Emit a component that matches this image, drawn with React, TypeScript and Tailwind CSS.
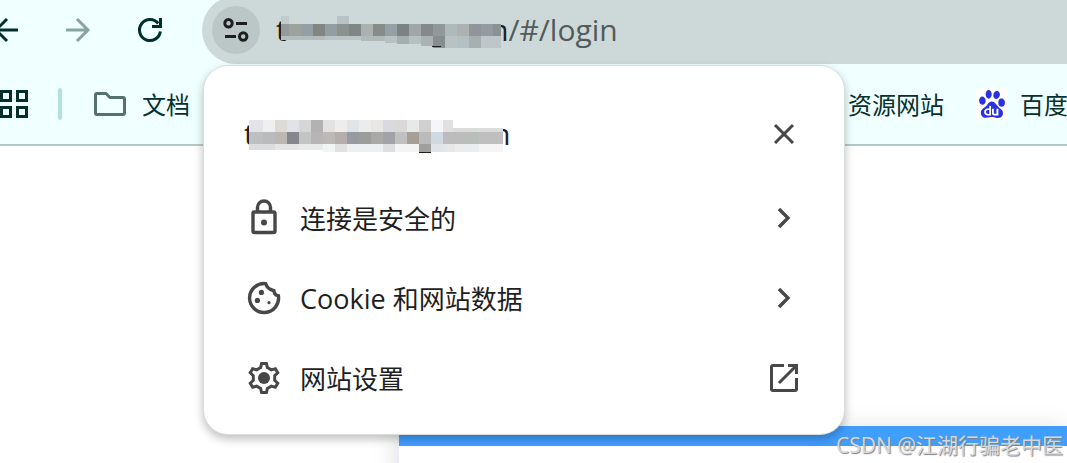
import type { ReactNode } from "react"
import { SiBaidu } from "react-icons/si"

type Block = [x: number, y: number, w: number, h: number, fill: string]

// Censored part of the address in the omnibox
const addressBlocks: Block[] = [
  [0, 4, 8, 8, "#c1cbcc"],
  [56, 4, 12, 8, "#b9c3c4"],
  [0, 12, 8, 12, "#939a9a"],
  [8, 12, 12, 12, "#9ca39e"],
  [20, 12, 12, 12, "#949fa5"],
  [32, 12, 12, 12, "#838580"],
  [44, 12, 12, 12, "#929ea2"],
  [56, 12, 12, 12, "#8b9391"],
  [68, 12, 12, 12, "#7f8786"],
  [80, 12, 12, 12, "#a9b1b1"],
  [92, 12, 12, 12, "#878c88"],
  [104, 12, 12, 12, "#959fa6"],
  [116, 12, 12, 12, "#7a8284"],
  [128, 12, 12, 12, "#9fa8a7"],
  [140, 12, 12, 12, "#85898c"],
  [152, 12, 12, 12, "#91989c"],
  [164, 12, 12, 12, "#b0b9b9"],
  [176, 12, 12, 12, "#adb1af"],
  [188, 12, 12, 12, "#8f959a"],
  [200, 12, 12, 12, "#929ba2"],
  [212, 12, 8, 12, "#8a9293"],
  [0, 24, 44, 4, "#b3bcbc"],
  [44, 24, 36, 4, "#bac4c5"],
  [80, 24, 24, 5, "#b0babb"],
  [104, 24, 12, 7, "#b8c1c2"],
  [116, 24, 12, 8, "#a4adaf"],
  [128, 24, 12, 8, "#b7c0c1"],
  [140, 24, 12, 10, "#aab2b4"],
  [152, 24, 12, 12, "#868e91"],
  [164, 24, 12, 12, "#b8c2c2"],
  [176, 24, 12, 12, "#b3bfc3"],
  [188, 24, 12, 12, "#a7afb2"],
  [200, 24, 20, 12, "#bec7c8"],
  [151, 34, 9, 1, "#1f1f1f"],
]

// Censored part of the site name in the popup
const titleBlocks: Block[] = [
  [0, 6, 14, 12, "#e2e4e7"],
  [14, 6, 12, 12, "#efefef"],
  [26, 6, 12, 12, "#dbdad7"],
  [38, 6, 12, 12, "#e2e3e6"],
  [50, 6, 12, 12, "#d6d6d7"],
  [62, 6, 12, 12, "#b4b1b3"],
  [74, 6, 12, 12, "#e2e2e2"],
  [86, 6, 12, 12, "#ededed"],
  [98, 6, 12, 12, "#e1e4e6"],
  [110, 6, 12, 12, "#ececec"],
  [122, 6, 12, 12, "#e8e7e5"],
  [134, 6, 12, 12, "#d8dadf"],
  [146, 6, 12, 12, "#dbd9d8"],
  [158, 6, 12, 12, "#e6e9e8"],
  [170, 6, 12, 12, "#cfd0cf"],
  [182, 6, 12, 12, "#f5f6f9"],
  [194, 6, 10, 12, "#e1e0df"],
  [204, 14, 50, 4, "#dcdcdc"],
  [0, 18, 14, 12, "#bdbfc0"],
  [14, 18, 12, 12, "#babbbc"],
  [26, 18, 12, 12, "#bbb8b2"],
  [38, 18, 12, 12, "#86878c"],
  [50, 18, 12, 12, "#c3c5c4"],
  [62, 18, 12, 12, "#b6b6b6"],
  [74, 18, 12, 12, "#bdbab5"],
  [86, 18, 12, 12, "#b4aeae"],
  [98, 18, 12, 12, "#979ba1"],
  [110, 18, 12, 12, "#9b9d9b"],
  [122, 18, 12, 12, "#a8a9a8"],
  [134, 18, 12, 12, "#a1a3a7"],
  [146, 18, 12, 12, "#c0c0c0"],
  [158, 18, 12, 12, "#a59f98"],
  [170, 18, 12, 12, "#bbbbbb"],
  [182, 18, 12, 12, "#d0d8e1"],
  [194, 18, 24, 12, "#bcbcbc"],
  [218, 18, 12, 12, "#b9bebb"],
  [230, 18, 24, 12, "#bfbfbf"],
  [0, 30, 26, 6, "#dcddde"],
  [26, 30, 24, 6, "#e5e5e4"],
  [50, 30, 24, 6, "#e9ebeb"],
  [74, 30, 12, 8, "#f3f4f4"],
  [86, 30, 12, 8, "#e2e1df"],
  [98, 30, 36, 8, "#eeeff0"],
  [134, 30, 12, 8, "#dedfe1"],
  [146, 30, 24, 8, "#f4f4f4"],
  [170, 30, 12, 8, "#9f9f9e"],
  [182, 30, 12, 8, "#e0e3e7"],
  [194, 30, 12, 8, "#e7e7e7"],
  [206, 30, 24, 8, "#eaecee"],
  [230, 30, 24, 8, "#f5f5f5"],
  [170, 38, 12, 1, "#1f1f1f"],
]

function Mosaic({ blocks, width, height, className }: { blocks: Block[]; width: number; height: number; className: string }) {
  return (
    <svg width={width} height={height} shapeRendering="crispEdges" className={`relative z-10 shrink-0 ${className}`} aria-hidden="true">
      {blocks.map(([x, y, w, h, fill]) => (
        <rect key={`${x}-${y}`} x={x} y={y} width={w} height={h} fill={fill} />
      ))}
    </svg>
  )
}

// All icons are drawn around the middle of a 48px box
function Icon({ children, className = "" }: { children: ReactNode; className?: string }) {
  return (
    <svg
      width="48"
      height="48"
      viewBox="-24 -24 48 48"
      fill="none"
      stroke="currentColor"
      strokeWidth="3"
      className={`shrink-0 ${className}`}
      aria-hidden="true"
    >
      {children}
    </svg>
  )
}

const gearPoints = [0, 60, 120, 180, 240, 300]
  .flatMap((deg) => {
    const a = (deg * Math.PI) / 180
    return [
      [-3.4, -10.4],
      [-2.4, -14.5],
      [2.4, -14.5],
      [3.4, -10.4],
    ].map(([x, y]) => `${(x * Math.cos(a) - y * Math.sin(a)).toFixed(2)},${(x * Math.sin(a) + y * Math.cos(a)).toFixed(2)}`)
  })
  .join(" ")

const LockIcon = () => (
  <Icon>
    <rect x="-11" y="-6" width="22" height="20.5" rx="1.5" strokeWidth="3.4" />
    <path d="M-6.5 -6V-10.5A6.5 6.5 0 0 1 6.5 -10.5V-6" strokeWidth="3.4" />
    <circle cy="4.5" r="3" fill="currentColor" stroke="none" />
  </Icon>
)

const CookieIcon = () => (
  <Icon>
    <path d="M1.6 -14.4A14.5 14.5 0 1 0 14.4 -2.2Q10.5 -2.5 9.8 -7.4Q3.4 -8.5 1.6 -14.4Z" strokeWidth="3.4" />
    <g fill="currentColor" stroke="none">
      <circle cx="-2.6" cy="-5.6" r="2.6" />
      <circle cx="-6.6" cy="2.4" r="2.6" />
      <circle cx="5" cy="4.7" r="1.6" />
    </g>
  </Icon>
)

const GearIcon = () => (
  <Icon>
    <polygon points={gearPoints} />
    <circle r="6" fill="currentColor" stroke="none" />
  </Icon>
)

const ChevronIcon = () => (
  <Icon>
    <path d="M-5 -9L4 0L-5 9" strokeWidth="3.4" />
  </Icon>
)

const ExternalIcon = () => (
  <Icon>
    <path d="M0 -12.5H-11Q-12.5 -12.5 -12.5 -11V11Q-12.5 12.5 -11 12.5H11Q12.5 12.5 12.5 11V0" />
    <path d="M4 -12.5H12.5V-4M12 -12L-5 5" />
  </Icon>
)

const menuItems = [
  { latin: "", label: "连接是安全的", icon: <LockIcon />, end: <ChevronIcon /> },
  { latin: "Cookie", label: "和网站数据", icon: <CookieIcon />, end: <ChevronIcon /> },
  { latin: "", label: "网站设置", icon: <GearIcon />, end: <ExternalIcon /> },
]

function Toolbar() {
  return (
    <div className="-mt-1 flex h-[68px] items-center">
      <div className="-ml-[18px] flex shrink-0 gap-6 text-[#002f2c]">
        <button type="button" aria-label="后退">
          <Icon>
            <path d="M12 0H-9M1 -11L-10 0L1 11" />
          </Icon>
        </button>
        <button type="button" aria-label="前进" className="text-[#8aa3a1]">
          <Icon>
            <path d="M-12 0H9M-1 -11L10 0L-1 11" />
          </Icon>
        </button>
        <button type="button" aria-label="重新加载">
          <Icon>
            <path d="M10.4 1.5A10.5 10.5 0 1 1 8.2 -6.5" />
            <path d="M10.5 -12V-3.5H2" />
          </Icon>
        </button>
      </div>
      <div className="ml-7 flex h-full flex-1 items-center rounded-l-full bg-[#cdd9d8] pl-[10px]">
        <button type="button" aria-label="查看网站信息" className="shrink-0 rounded-full bg-[#bbc7c6] text-[#1f1f1f]">
          <Icon>
            <circle cx="-7.5" cy="-6.8" r="3.7" />
            <path d="M0 -6.5H11M-11 6.5H0" />
            <circle cx="7.2" cy="6.5" r="3.7" />
          </Icon>
        </button>
        <div className="ml-4 flex items-center text-[30px] leading-9 text-[#1f1f1f]">
          <span>t</span>
          <Mosaic blocks={addressBlocks} width={220} height={36} className="-ml-1.5" />
          <span className="-ml-5">m</span>
          <span className="text-[#525b5b]">/#/login</span>
        </div>
      </div>
    </div>
  )
}

function BookmarksBar() {
  return (
    <nav className="flex h-[82px] items-center overflow-hidden border-b-2 border-[#b5cac8] text-2xl whitespace-nowrap text-[#06302d]">
      <button type="button" aria-label="应用" className="shrink-0">
        <svg width="28" height="28" fill="none" stroke="#002f2c" strokeWidth="3" aria-hidden="true">
          <path d="M1.5 1.5h9v9h-9zM17.5 1.5h9v9h-9zM1.5 17.5h9v9h-9zM17.5 17.5h9v9h-9z" />
        </svg>
      </button>
      <div className="ml-[30px] h-8 w-1 shrink-0 rounded-full bg-[#b0e1df]"></div>
      <a href="#docs" className="ml-8 flex shrink-0 items-center gap-4">
        <svg width="32" height="24" fill="none" stroke="#54716f" strokeWidth="3" strokeLinejoin="round" aria-hidden="true">
          <path d="M3 1.5H12L16 5.5H29Q30.5 5.5 30.5 7V21Q30.5 22.5 29 22.5H3Q1.5 22.5 1.5 21V3Q1.5 1.5 3 1.5Z" />
        </svg>
        <span className="pt-0.5">文档</span>
      </a>
      <a href="#resources" className="ml-[658px] shrink-0 pt-0.5">
        资源网站
      </a>
      <a href="#baidu" className="ml-8 flex shrink-0 items-center gap-3">
        <span className="flex size-8 items-center justify-center rounded bg-white">
          <SiBaidu size={28} color="#2932e1" />
        </span>
        <span className="pt-0.5">百度</span>
      </a>
    </nav>
  )
}

function SiteInfoPopup() {
  return (
    <section
      aria-label="网站信息"
      className="absolute top-[66px] left-[204px] z-20 w-[640px] rounded-3xl bg-white px-9 pt-7 pb-4 text-[#1f1f1f] shadow-[0_0_0_1px_#d9dedd,0_4px_10px_1px_rgba(0,0,0,0.26)]"
    >
      <div className="mb-1 flex h-20 items-center justify-between">
        <h1 className="ml-1 flex items-center text-[30px] leading-10 font-medium">
          <span>t</span>
          <Mosaic blocks={titleBlocks} width={254} height={40} className="-ml-1.5" />
          <span className="-ml-5">m</span>
        </h1>
        <button type="button" aria-label="关闭" className="text-[#474747]">
          <Icon>
            <path d="M-9 -9L9 9M9 -9L-9 9" />
          </Icon>
        </button>
      </div>
      {menuItems.map((item) => (
        <button key={item.label} type="button" className="flex h-20 w-full items-center gap-3 text-left text-[#474747]">
          {item.icon}
          <span className="flex-1 pt-0.5 text-[26px] leading-9 text-[#1f1f1f]">
            {item.latin && <span className="text-[27px]">{item.latin} </span>}
            {item.label}
          </span>
          {item.end}
        </button>
      ))}
    </section>
  )
}

export default function App() {
  return (
    <div className="relative flex h-screen flex-col overflow-hidden bg-white font-['Open_Sans','Noto_Sans_CJK_SC',sans-serif]">
      <header className="bg-[#f0ffff]">
        <Toolbar />
        <BookmarksBar />
      </header>
      <SiteInfoPopup />
      <main className="flex-1 overflow-hidden pt-[280px] pl-[398px]">
        <div className="h-40 border-l border-[#ebeef5] bg-white shadow-[0_4px_25px_#dcdada]">
          <div className="h-5 bg-[#409eff]"></div>
        </div>
      </main>
      <p className="absolute right-1 bottom-0 text-[21px] leading-9 whitespace-nowrap text-[#d3d9e0] [text-shadow:1px_1px_1px_#808080]">
        CSDN @江湖行骗老中医
      </p>
    </div>
  )
}
